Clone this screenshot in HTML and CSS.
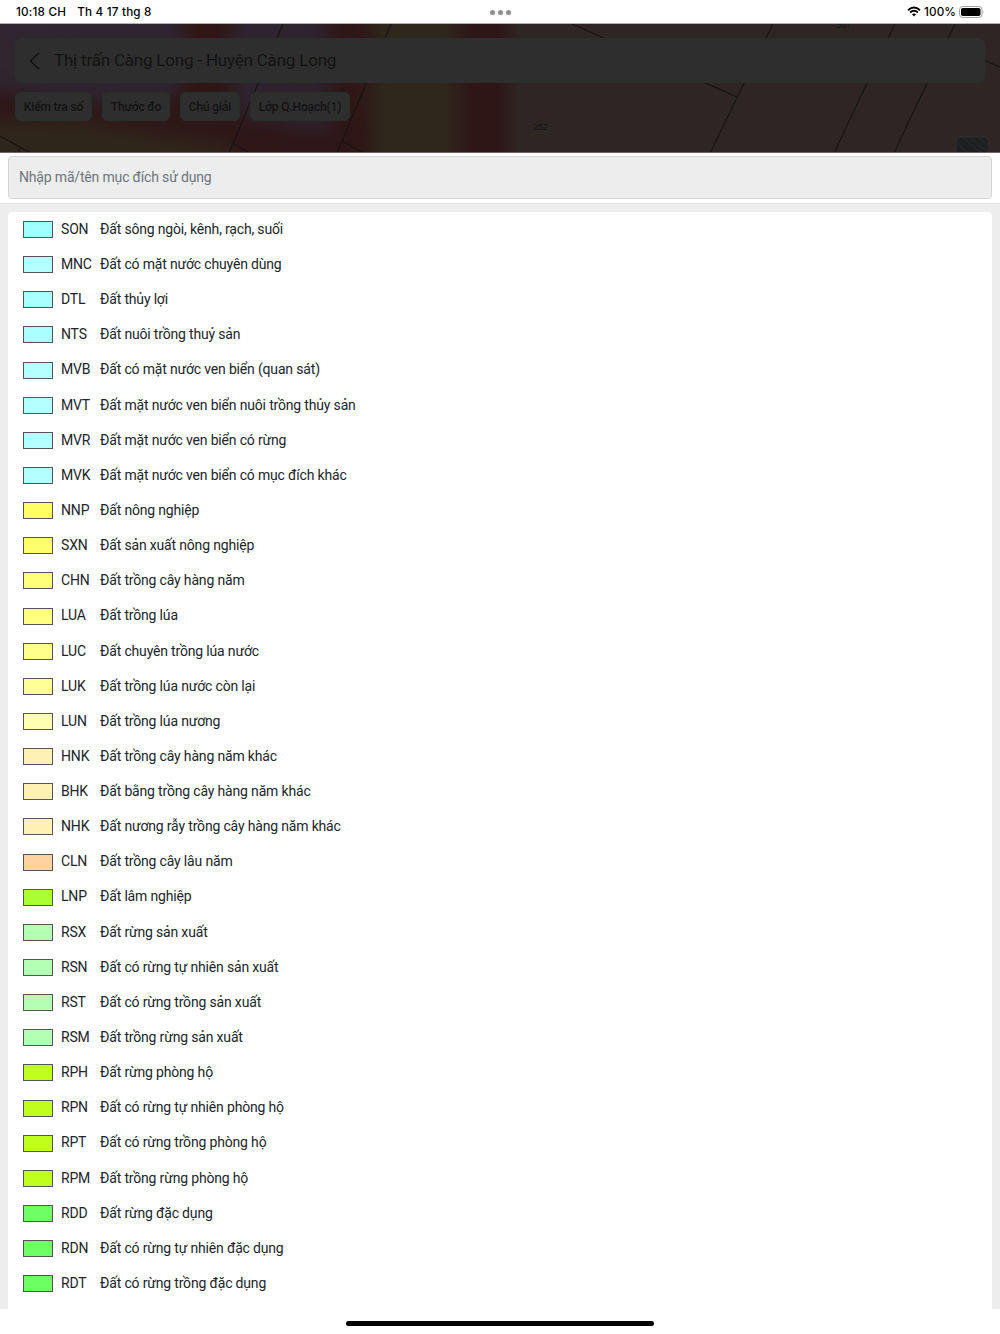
FILE: index.html
```html
<!DOCTYPE html>
<html lang="vi">
<head>
    <meta charset="UTF-8">
    <meta name="viewport" content="width=device-width, initial-scale=1.0">
    <title>Chú giải</title>
    <link rel="stylesheet" href="styles.css">
</head>
<body>

    <div class="status-bar">
        <div class="status-left"><span>10:18 CH</span><span>Th 4 17 thg 8</span></div>
        <div class="dots"><i></i><i></i><i></i></div>
        <div class="status-right">
            <svg class="wifi" width="14" height="11" viewBox="0 0 14 11">
                <path d="M1 4.2 Q7 -1.2 13 4.2" fill="none" stroke="#000" stroke-width="1.9"/>
                <path d="M3.1 6.5 Q7 3.1 10.9 6.5" fill="none" stroke="#000" stroke-width="1.8"/>
                <path d="M4.9 8.3 Q7 6.5 9.1 8.3 L7 10.4 Z" fill="#000"/>
            </svg>
            <span>100%</span>
            <svg class="battery" width="26" height="12" viewBox="0 0 26 12">
                <rect x="0.5" y="0.5" width="22.5" height="11" rx="3.2" fill="#fff" stroke="#a0a0a0"/>
                <rect x="2" y="2" width="19.5" height="8" rx="1.8" fill="#000"/>
                <path d="M24.3 4.2 Q25.6 6 24.3 7.8 Z" fill="#a0a0a0"/>
            </svg>
        </div>
    </div>

    <header class="map">
        <svg class="map-bg" width="1000" height="129" viewBox="0 0 1000 129">
            <defs>
                <linearGradient id="zones" x1="0" x2="1" y1="0" y2="0">
                    <stop offset="0" stop-color="#2f2630"/>
                    <stop offset="0.17" stop-color="#2f2430"/>
                    <stop offset="0.198" stop-color="#301615"/>
                    <stop offset="0.217" stop-color="#301615"/>
                    <stop offset="0.245" stop-color="#2e232e"/>
                    <stop offset="0.315" stop-color="#2e222d"/>
                    <stop offset="0.343" stop-color="#2f1616"/>
                    <stop offset="0.362" stop-color="#2f1816"/>
                    <stop offset="0.385" stop-color="#2f271c"/>
                    <stop offset="0.445" stop-color="#2f271c"/>
                    <stop offset="0.475" stop-color="#2e1516"/>
                    <stop offset="0.497" stop-color="#2e1516"/>
                    <stop offset="0.518" stop-color="#2e2524"/>
                    <stop offset="1" stop-color="#2e2524"/>
                </linearGradient>
                <filter id="soft" x="-30%" y="-60%" width="160%" height="220%" color-interpolation-filters="sRGB">
                    <feGaussianBlur stdDeviation="9"/>
                </filter>
            </defs>
            <rect width="1000" height="129" fill="url(#zones)"/>
            <g filter="url(#soft)">
                <path d="M-40 62 L90 78 L170 76 L200 52 L240 95 L350 112 L350 160 L-40 160 Z" fill="#2f1617"/>
                <path d="M-40 93 L90 99 L170 112 L235 122 L220 165 L-40 165 Z" fill="#2f261b"/>
                <ellipse cx="302" cy="88" rx="27" ry="20" fill="#2e222d"/>
            </g>
            <g fill="none" stroke="#171414" stroke-width="1.1">
                <path d="M283 0 L229 129 M232 119 L250 129"/>
                <path d="M391 0 L337 129 M342 117 L364 129"/>
                <path d="M0 112 L31 129 M21 123 L18 129"/>
                <path d="M572 0 L737 73"/>
                <path d="M773 0 L710 129"/>
                <path d="M895 0 L834 129"/>
                <path d="M955 0 L894 129"/>
                <path d="M960 26 L1000 43"/>
            </g>
            <text x="533" y="106" class="parcel">252</text>
            <text x="836" y="4" class="parcel">307</text>
            <rect x="956" y="113" width="33" height="30" rx="5" fill="#1d1f20" stroke="#303334"/>
            <path d="M964 114 Q971 123 983 129 M971 114 Q978 122 988 127 M958 119 Q963 126 968 129 M979 114 L988 121" stroke="#292b2b" fill="none"/>
        </svg>
        <div class="title-bar">
            <svg width="11" height="18" viewBox="0 0 11 18"><path d="M10 1 L1.5 9 L10 17" fill="none" stroke="#101010" stroke-width="1.3"/></svg>
            <span>Thị trấn Càng Long - Huyện Càng Long</span>
        </div>
        <div class="chips">
            <span class="chip chip-check">Kiểm tra số</span>
            <span class="chip chip-ruler">Thước đo</span>
            <span class="chip chip-legend">Chú giải</span>
            <span class="chip chip-layer">Lớp Q.Hoạch(1)</span>
        </div>
    </header>

    <div class="search">
        <input type="text" class="search-input" placeholder="Nhập mã/tên mục đích sử dụng">
    </div>

    <main class="content">
        <ul class="legend">
            <li><i class="swatch son"></i><b>SON</b><span>Đất sông ngòi, kênh, rạch, suối</span></li>
            <li><i class="swatch mnc"></i><b>MNC</b><span>Đất có mặt nước chuyên dùng</span></li>
            <li><i class="swatch dtl"></i><b>DTL</b><span>Đất thủy lợi</span></li>
            <li><i class="swatch dtl"></i><b>NTS</b><span>Đất nuôi trồng thuỷ sản</span></li>
            <li><i class="swatch mnc"></i><b>MVB</b><span>Đất có mặt nước ven biển (quan sát)</span></li>
            <li><i class="swatch mnc"></i><b>MVT</b><span>Đất mặt nước ven biển nuôi trồng thủy sản</span></li>
            <li><i class="swatch mnc"></i><b>MVR</b><span>Đất mặt nước ven biển có rừng</span></li>
            <li><i class="swatch mnc"></i><b>MVK</b><span>Đất mặt nước ven biển có mục đích khác</span></li>
            <li><i class="swatch nnp"></i><b>NNP</b><span>Đất nông nghiệp</span></li>
            <li><i class="swatch sxn"></i><b>SXN</b><span>Đất sản xuất nông nghiệp</span></li>
            <li><i class="swatch chn"></i><b>CHN</b><span>Đất trồng cây hàng năm</span></li>
            <li><i class="swatch lua"></i><b>LUA</b><span>Đất trồng lúa</span></li>
            <li><i class="swatch luc"></i><b>LUC</b><span>Đất chuyên trồng lúa nước</span></li>
            <li><i class="swatch luk"></i><b>LUK</b><span>Đất trồng lúa nước còn lại</span></li>
            <li><i class="swatch lun"></i><b>LUN</b><span>Đất trồng lúa nương</span></li>
            <li><i class="swatch hnk"></i><b>HNK</b><span>Đất trồng cây hàng năm khác</span></li>
            <li><i class="swatch hnk"></i><b>BHK</b><span>Đất bằng trồng cây hàng năm khác</span></li>
            <li><i class="swatch hnk"></i><b>NHK</b><span>Đất nương rẫy trồng cây hàng năm khác</span></li>
            <li><i class="swatch cln"></i><b>CLN</b><span>Đất trồng cây lâu năm</span></li>
            <li><i class="swatch lnp"></i><b>LNP</b><span>Đất lâm nghiệp</span></li>
            <li><i class="swatch rsx"></i><b>RSX</b><span>Đất rừng sản xuất</span></li>
            <li><i class="swatch rsx"></i><b>RSN</b><span>Đất có rừng tự nhiên sản xuất</span></li>
            <li><i class="swatch rsx"></i><b>RST</b><span>Đất có rừng trồng sản xuất</span></li>
            <li><i class="swatch rsx"></i><b>RSM</b><span>Đất trồng rừng sản xuất</span></li>
            <li><i class="swatch rph"></i><b>RPH</b><span>Đất rừng phòng hộ</span></li>
            <li><i class="swatch rph"></i><b>RPN</b><span>Đất có rừng tự nhiên phòng hộ</span></li>
            <li><i class="swatch rph"></i><b>RPT</b><span>Đất có rừng trồng phòng hộ</span></li>
            <li><i class="swatch rph"></i><b>RPM</b><span>Đất trồng rừng phòng hộ</span></li>
            <li><i class="swatch rdd"></i><b>RDD</b><span>Đất rừng đặc dụng</span></li>
            <li><i class="swatch rdd"></i><b>RDN</b><span>Đất có rừng tự nhiên đặc dụng</span></li>
            <li><i class="swatch rdd"></i><b>RDT</b><span>Đất có rừng trồng đặc dụng</span></li>
        </ul>
    </main>

    <footer class="home"><div class="home-bar"></div></footer>

</body>
</html>
```

FILE: styles.css
```css
* {
    box-sizing: border-box;
}

body {
    margin: 0;
    height: 1334px;
    display: flex;
    flex-direction: column;
    overflow: hidden;
    background: #fff;
    color: #212529;
    font-family: Roboto, sans-serif;
    font-size: 14px;
    letter-spacing: -0.17px;
}

/* Status bar */
.status-bar {
    flex: none;
    height: 24px;
    padding: 0 15px 0 16px;
    display: grid;
    grid-template-columns: 1fr auto 1fr;
    align-items: center;
    border-bottom: 1px solid #b5b3b3;
    color: #000;
    font-family: Inter, sans-serif;
    font-size: 11.7px;
    font-weight: 500;
    letter-spacing: 0.1px;
}

.status-left {
    display: flex;
    gap: 11px;
    letter-spacing: 0.2px;
}

.dots {
    display: flex;
    gap: 3px;
    padding-top: 2px;
}

.dots i {
    width: 5px;
    height: 5px;
    border-radius: 50%;
    background: #8e8e8e;
}

.status-right {
    display: flex;
    justify-content: flex-end;
    align-items: center;
    gap: 3px;
}

/* Dimmed map header */
.map {
    flex: none;
    position: relative;
    height: 129px;
    padding: 14px 15px 0;
    border-bottom: 1px solid #6b6463;
    letter-spacing: 0;
}

.map-bg {
    position: absolute;
    top: 0;
    left: 0;
    z-index: -1;
}

.parcel {
    font-family: "Liberation Sans", sans-serif;
    font-size: 9px;
    fill: #12171b;
}

.title-bar {
    display: flex;
    align-items: center;
    gap: 14px;
    height: 45px;
    padding-left: 14px;
    border-radius: 7px;
    background: #2e2e2e;
    color: #131313;
    font-size: 17px;
    letter-spacing: -0.2px;
}

.title-bar span {
    padding-bottom: 2px;
}

.chips {
    display: flex;
    gap: 10px;
    margin-top: 9px;
}

.chip {
    height: 29px;
    border: 1px solid #253029;
    border-radius: 5px;
    background: #2e2e2e;
    color: #131313;
    font-size: 12px;
    font-weight: 500;
    letter-spacing: -0.15px;
    line-height: 28px;
    text-align: center;
}

.chip-check {
    width: 77px;
}

.chip-ruler {
    width: 68px;
}

.chip-legend {
    width: 60px;
}

.chip-layer {
    width: 100px;
}

/* Search */
.search {
    flex: none;
    height: 51px;
    padding: 3px 8px 0;
    border-bottom: 1px solid #e2e2e2;
}

.search-input {
    display: block;
    width: 100%;
    height: 43px;
    padding: 0 10px 2px;
    border: 1px solid #d6d6d6;
    border-radius: 4px;
    background: #ededed;
    font-family: inherit;
    font-size: 14px;
    letter-spacing: inherit;
}

.search-input::placeholder {
    color: #6c757d;
}

/* Legend */
.content {
    flex: none;
    height: 1105px;
    padding: 8px 8px 0;
    background: #ededed;
}

.legend {
    height: 1097px;
    margin: 0;
    padding: 0 15px;
    list-style: none;
    border-radius: 4px 4px 0 0;
    background: #fff;
}

.legend li {
    display: flex;
    align-items: center;
    height: 35.15px;
}

.legend b,
.legend span {
    padding-bottom: 1.5px;
}

.legend b {
    width: 39px;
    font-weight: 400;
}

.swatch {
    width: 30px;
    height: 17px;
    margin-right: 8px;
    border: 1px solid #555;
}

.son {
    background: #a0ffff;
}

.mnc {
    background: #b4ffff;
}

.dtl {
    background: #aaffff;
}

.nnp {
    background: #ffff64;
}

.sxn {
    background: #ffff6e;
}

.chn {
    background: #ffff78;
}

.lua {
    background: #ffff82;
}

.luc {
    background: #ffff8c;
}

.luk {
    background: #ffff96;
}

.lun {
    background: #ffffb4;
}

.hnk {
    background: #fff0b4;
}

.cln {
    background: #ffd2a0;
}

.lnp {
    background: #aaff32;
}

.rsx {
    background: #b4ffb4;
}

.rph {
    background: #beff1e;
}

.rdd {
    background: #6eff64;
}

/* Home indicator */
.home {
    flex: 1;
    display: flex;
    justify-content: center;
    padding-top: 12px;
}

.home-bar {
    width: 308px;
    height: 5px;
    border-radius: 3px;
    background: #000;
}
```
